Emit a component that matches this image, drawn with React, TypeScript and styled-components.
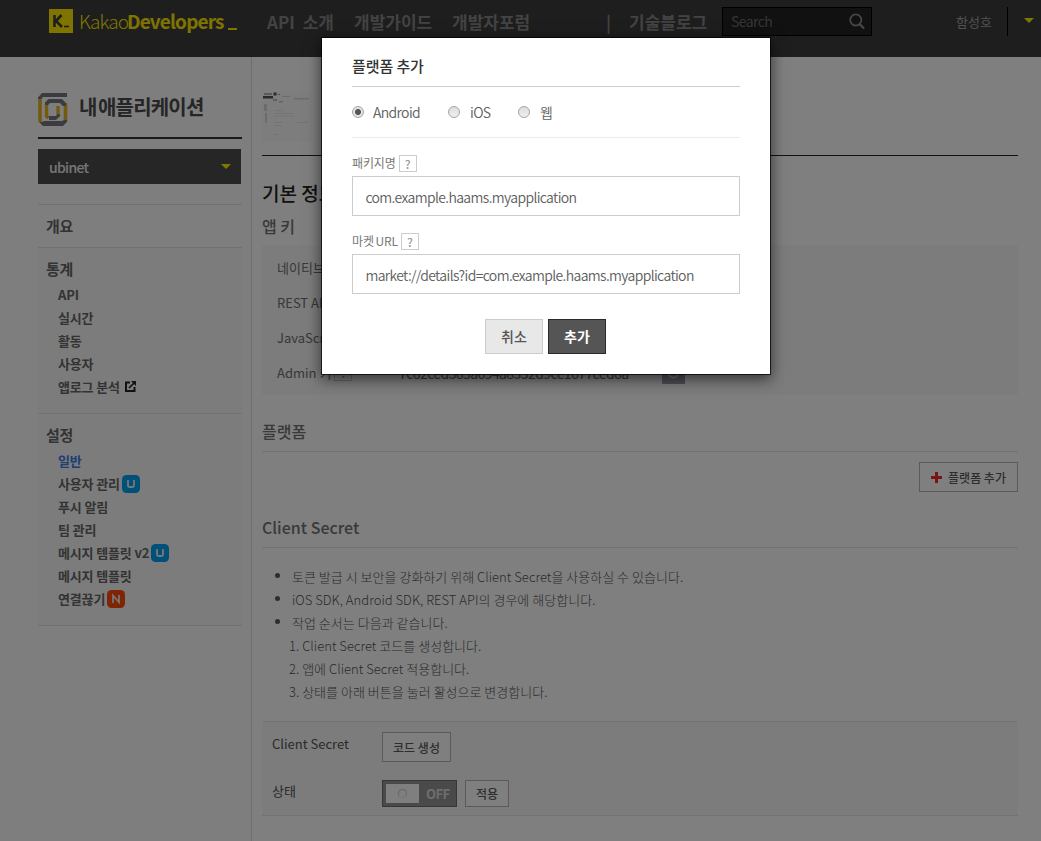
import React from "react";
import styled, { createGlobalStyle } from "styled-components";

const Global = createGlobalStyle`
  *, *::before, *::after { box-sizing: border-box; }
  html, body { margin: 0; padding: 0; }
  body {
    font-family: "Noto Sans CJK KR", "Noto Sans", sans-serif;
    font-size: 13px;
    color: #666;
    background: #fff;
    overflow: hidden;
  }
  h1, h2, h3, ul, ol, p { margin: 0; padding: 0; font-weight: inherit; }
  ul, ol { list-style: none; }
  button, input { font-family: inherit; margin: 0; }
`;

const Page = styled.div`
  position: relative;
  height: 841px;
  overflow: hidden;
  display: flex;
  flex-direction: column;
`;

/* ---------- header ---------- */

const Header = styled.header`
  flex: none;
  height: 57px;
  background: #3c3c3c;
  display: flex;
  align-items: flex-start;
  padding: 7px 7px 0 49px;
  white-space: nowrap;
`;

const Logo = styled.a`
  display: flex;
  width: 218px;
  color: #ffe800;
  height: 30px;
  line-height: 28px;
  font-size: 19px;
`;

const LogoMark = styled.svg`
  display: block;
  margin: 2px 6px 0 0;
`;

const LogoThin = styled.span`
  font-weight: 300;
  letter-spacing: -0.9px;
  width: 48px;
`;

const LogoBold = styled.span`
  font-weight: 700;
  letter-spacing: -0.85px;
  width: 101px;
`;

const LogoCursor = styled.span`
  width: 9px;
  height: 2px;
  margin-top: 21px;
  background: #ffe800;
`;

const NavItem = styled.a<{ $w: number; $gap?: number }>`
  width: ${(p) => p.$w}px;
  height: 30px;
  line-height: 29px;
  font-size: 17px;
  font-weight: 700;
  color: #868686;
  word-spacing: ${(p) => p.$gap ?? 0}px;
`;

const SearchBox = styled.div`
  width: 150px;
  height: 29px;
  border: 1px solid #000;
  background: #222;
  display: flex;
  align-items: center;
  justify-content: space-between;
  padding: 0 6px 0 8px;
  color: #6c6c6c;
  font-size: 14px;
  letter-spacing: -0.6px;
  line-height: 27px;
`;

const UserName = styled.span`
  margin-left: 84px;
  width: 51px;
  line-height: 29px;
  font-size: 13px;
  color: #a0a0a0;
`;

const UserMenu = styled.div`
  height: 29px;
  border-left: 1px solid #000;
  padding: 11px 0 0 16px;
`;

const Caret = styled.span`
  display: block;
  width: 0;
  height: 0;
  border: 5px solid transparent;
  border-top-color: #fff000;
  border-bottom: 0;
`;

/* ---------- frame ---------- */

const Body = styled.div`
  flex: 1;
  display: flex;
`;

const Sidebar = styled.aside`
  flex: none;
  width: 252px;
  padding: 36px 9px 0 38px;
  border-right: 1px solid #dcdcdc;
  background: #fdfdfd;
`;

const AppTitle = styled.div`
  display: flex;
  height: 46px;
  border-bottom: 2px solid #333;
  margin-bottom: 10px;
  width: 204px;
`;

const AppTitleText = styled.h1`
  margin-left: 11px;
  font-size: 20px;
  font-weight: 700;
  line-height: 27px;
  letter-spacing: -0.8px;
  word-spacing: -2.4px;
  color: #4d4d4d;
`;

const AppSelect = styled.div`
  width: 203px;
  height: 35px;
  background: #4c4c4c;
  display: flex;
  align-items: center;
  justify-content: space-between;
  padding: 0 10px 0 11px;
  color: #ececec;
  font-size: 14px;
  font-weight: 500;
  letter-spacing: -0.7px;
  margin-bottom: 20px;
`;

const MenuGroup = styled.section<{ $h: number }>`
  width: 204px;
  height: ${(p) => p.$h}px;
  border-top: 1px solid #e2e2e2;
  background: ${(p) => (p.$h > 50 ? "#f9f9f9" : "transparent")};
  padding: 10px 0 0 8px;
  &:last-child {
    border-bottom: 1px solid #e2e2e2;
  }
`;

const MenuHead = styled.h2`
  height: 25px;
  line-height: 21px;
  font-size: 15px;
  font-weight: 700;
  letter-spacing: -0.3px;
  color: #666;
`;

const MenuItem = styled.li<{ $active?: boolean }>`
  height: 23px;
  padding-left: 12px;
  display: flex;
  align-items: center;
  font-size: 13px;
  font-weight: 700;
  letter-spacing: -0.15px;
  color: ${(p) => (p.$active ? "#3c7ae6" : "#666")};
  & > svg { margin-left: 2px; }
`;

/* ---------- main ---------- */

const Main = styled.main`
  flex: 1;
  padding: 33px 23px 0 10px;
`;

const AppHeader = styled.div`
  height: 66px;
  border-bottom: 1px solid #222;
  padding-top: 2px;
`;

const PageTitle = styled.h2`
  margin: 21px 0 6px;
  height: 32px;
  line-height: 32px;
  font-size: 19px;
  font-weight: 500;
  color: #222;
`;

const SectionTitle = styled.h3<{ $h: number; $lined?: boolean }>`
  height: ${(p) => p.$h}px;
  line-height: 22px;
  font-size: 16px;
  font-weight: 500;
  color: #727272;
  border-bottom: ${(p) => (p.$lined ? "1px solid #e4e4e4" : "0")};
`;

const KeyPanel = styled.div`
  margin: 3px 0 25px;
  height: 150px;
  background: #f8f8f8;
  padding: 5px 0 0 15px;
`;

const KeyRow = styled.div`
  display: flex;
  align-items: center;
  height: 35px;
  font-size: 13px;
  color: #707070;
`;

const KeyLabel = styled.div`
  width: 122px;
  display: flex;
  align-items: center;
`;

const KeyValue = styled.div`
  width: 263px;
  font-size: 14px;
  letter-spacing: -0.58px;
  color: #666;
`;

const Hint = styled.span`
  display: inline-block;
  width: 18px;
  height: 17px;
  border: 1px solid #ccc;
  margin-left: 3px;
  text-align: center;
  line-height: 15px;
  font-size: 12px;
  font-weight: 500;
  color: #999;
`;

const Refresh = styled.div`
  width: 23px;
  height: 22px;
  background: #9a9ca4;
  display: flex;
  align-items: center;
  justify-content: center;
`;

const PlatformBar = styled.div`
  height: 64px;
  padding-top: 10px;
  display: flex;
  justify-content: flex-end;
`;

const OutlineButton = styled.button<{ $w: number; $h: number }>`
  width: ${(p) => p.$w}px;
  height: ${(p) => p.$h}px;
  display: flex;
  align-items: center;
  justify-content: center;
  gap: 6px;
  padding: 0;
  border: 1px solid #b4b4b4;
  background: #fff;
  font-size: 12px;
  font-weight: 500;
  color: #5c5c5c;
`;

const NoteList = styled.ul`
  padding: 17px 0 0 13px;
  height: 173px;
  font-weight: 300;
  font-size: 13px;
  letter-spacing: 0.02px;
  color: #555;
`;

const Note = styled.li`
  height: 23px;
  display: flex;
  align-items: center;
  &::before {
    content: "";
    width: 5px;
    height: 5px;
    border-radius: 50%;
    background: #5a5a5a;
    margin: -2px 12px 0 0;
  }
`;

const Step = styled.li`
  height: 23px;
  line-height: 23px;
  padding-left: 14px;
`;

const SecretPanel = styled.div`
  height: 95px;
  background: #f8f8f8;
  border-top: 1px solid #e4e4e4;
  border-bottom: 1px solid #e4e4e4;
  padding: 10px 0 0 10px;
`;

const SecretRow = styled.div`
  display: flex;
  height: 48px;
  gap: 8px;
`;

const SecretLabel = styled.div<{ $line: number }>`
  width: 102px;
  line-height: ${(p) => p.$line}px;
  font-size: 13px;
  color: #555;
`;

const Toggle = styled.div`
  width: 75px;
  height: 27px;
  background: #949494;
  border: 1px solid #6c6c6c;
  display: flex;
  align-items: center;
  padding-left: 3px;
  color: #ddd;
  font-size: 13px;
  font-weight: 700;
  letter-spacing: -0.5px;
`;

const Knob = styled.div`
  width: 33px;
  height: 19px;
  background: #fff;
  display: flex;
  align-items: center;
  justify-content: center;
  margin-right: 7px;
  &::after {
    content: "";
    width: 9px;
    height: 9px;
    border-radius: 50%;
    border: 1px solid #ccc;
    border-bottom-color: #eee;
  }
`;

/* ---------- modal ---------- */

const Overlay = styled.div`
  position: absolute;
  inset: 0;
  background: rgba(0, 0, 0, 0.5);
`;

const Modal = styled.div`
  position: absolute;
  left: 322px;
  top: 38px;
  width: 448px;
  height: 336px;
  background: #fff;
  padding: 17px 30px 0;
  box-shadow: 0 0 0 1px rgba(0, 0, 0, 0.7), 0 4px 14px 1px rgba(0, 0, 0, 0.6);
`;

const ModalTitle = styled.h2`
  height: 32px;
  line-height: 22px;
  font-size: 15px;
  font-weight: 500;
  color: #333;
  border-bottom: 1px solid #ccc;
  letter-spacing: -0.1px;
`;

const RadioRow = styled.div`
  display: flex;
  height: 51px;
  border-bottom: 1px solid #ececec;
  line-height: 49px;
  font-size: 14px;
  font-weight: 350;
  letter-spacing: -0.64px;
  color: #606060;
`;

const RadioOption = styled.label<{ $w: number }>`
  width: ${(p) => p.$w}px;
  display: flex;
  align-items: center;
  white-space: nowrap;
`;

const RadioDot = styled.span<{ $on?: boolean }>`
  flex: none;
  width: 12px;
  height: 12px;
  border-radius: 50%;
  border: 1px solid #a4a4a4;
  background: ${(p) =>
    p.$on
      ? "radial-gradient(circle, #555 0 2.6px, #e4e4e4 3.4px)"
      : "linear-gradient(#ddd, #f0f0f0)"};
  margin-right: ${(p) => (p.$on ? 9 : 10)}px;
`;

const FieldLabel = styled.div<{ $top: number }>`
  display: flex;
  align-items: center;
  height: 17px;
  margin: ${(p) => p.$top}px 0 4px;
  font-size: 12px;
  letter-spacing: -0.15px;
  word-spacing: -0.8px;
  line-height: 17px;
  color: #777;
`;

const LabelText = styled.span`
  line-height: 15px;
  height: 17px;
`;

const Field = styled.div`
  height: 40px;
  border: 1px solid #ccc;
  padding-left: 12.4px;
  line-height: 40px;
  font-size: 14px;
  font-weight: 350;
  letter-spacing: -0.63px;
  color: #606060;
`;

const Actions = styled.div`
  display: flex;
  justify-content: center;
  gap: 5px;
  padding: 25px 1px 0 0;
`;

const ActionButton = styled.button<{ $primary?: boolean }>`
  width: 58px;
  height: 35px;
  padding: 0;
  font-size: 14px;
  line-height: 33px;
  font-weight: ${(p) => (p.$primary ? 700 : 500)};
  color: ${(p) => (p.$primary ? "#fff" : "#555")};
  background: ${(p) => (p.$primary ? "#555" : "#e8e8e8")};
  border: 1px solid ${(p) => (p.$primary ? "#2a2a2a" : "#ccc")};
`;

/* ---------- drawings ---------- */

const KMark = () => (
  <LogoMark width="24" height="24" viewBox="0 0 24 24">
    <rect width="24" height="24" fill="#ffe800" />
    <path d="M5.500 6v12M12.500 6L7 12l6 6" stroke="#3c3c3c" strokeWidth="2.600" fill="none" />
    <path d="M15 17.500h5" stroke="#3c3c3c" strokeWidth="1.600" />
  </LogoMark>
);

const AppMark = () => (
  <svg width="30" height="33" viewBox="0 0 30 33" fill="none">
    <path d="M2 5V29" stroke="#e6b422" strokeWidth="3.600" />
    <path d="M27.500 10V29" stroke="#e6b422" strokeWidth="3.600" />
    <path d="M0 4.500L4 0H29V4H5L3.500 6H0z" fill="#74787e" />
    <path d="M1 29h3l2-1h18l2-1h3v2l-4 4H5z" fill="#74787e" />
    <path d="M8.500 10V23l2 2" stroke="#e6b422" strokeWidth="3.400" />
    <path d="M7 9.500L10.500 6H24l4 4v3h-3.500l-2.500-3H12l-2 2H7z" fill="#74787e" />
    <path d="M20 13V24" stroke="#e6b422" strokeWidth="3.400" />
    <path d="M11 23h7l2-2h2v2l-4 4h-7z" fill="#74787e" />
  </svg>
);

const SearchIcon = () => (
  <svg width="16" height="17" viewBox="0 0 16 17" fill="none" stroke="#909090">
    <circle cx="6.800" cy="7" r="5.600" strokeWidth="1.700" />
    <path d="M10.800 11.200L15 15.600" strokeWidth="2.200" />
  </svg>
);

const ExternalMark = styled.svg`
  && { margin-left: 5px; }
`;

const ExternalIcon = () => (
  <ExternalMark width="11" height="11" viewBox="0 0 11 11" fill="none" stroke="#222">
    <path d="M5 1.500H1V10H9.500V6" strokeWidth="2" />
    <path d="M4 7L9 2" strokeWidth="1.700" />
    <path d="M6 0h5v5z" fill="#222" stroke="none" />
  </ExternalMark>
);

const Badge = ({ kind }: { kind: "U" | "N" }) => (
  <svg width="18" height="18" viewBox="0 0 18 18" fill="none">
    <rect width="18" height="18" rx="4.500" fill={kind === "U" ? "#00a0f0" : "#ff4a08"} />
    {kind === "U" ? (
      <path d="M6 5v5.200Q6 12 7.800 12h2.400Q12 12 12 10.200V5" stroke="#f0f0f0" strokeWidth="1.800" />
    ) : (
      <path d="M6 13V5.500L12 12.200V5" stroke="#f0f0f0" strokeWidth="1.700" />
    )}
  </svg>
);

const Thumbnail = () => (
  <svg width="50" height="50" viewBox="0 0 50 50">
    <rect width="50" height="50" fill="#fbfbfb" />
    <g fill="#555">
      <rect x="2" y="1" width="8" height="2" fill="#b4b4b4" />
      <rect x="1" y="4" width="10" height="2.500" />
      <rect x="11.500" y="0.500" width="3" height="3" />
      <rect x="16" y="2" width="2" height="1" fill="#999" />
    </g>
    <g fill="#d8d8d8">
      <rect x="20" y="4" width="8" height="1" />
      <rect x="32" y="6" width="15" height="1.500" />
      <rect x="2" y="12" width="3" height="7" />
      <rect x="3" y="21" width="2" height="10" />
    </g>
    <g fill="#e9e9e9">
      <rect x="12" y="18" width="9" height="1" />
      <rect x="12" y="21" width="20" height="1" />
      <rect x="12" y="23.500" width="20" height="1" />
      <rect x="12" y="30" width="9" height="1" />
      <rect x="12" y="33" width="7" height="1" />
      <rect x="34" y="30" width="12" height="1" />
      <rect x="12" y="42" width="5" height="1" />
    </g>
    <rect x="11" y="7" width="4" height="2" fill="#a9c9c9" />
    <rect x="17" y="9" width="4" height="1.500" fill="#a9d2cf" />
  </svg>
);

const stats = ["API", "실시간", "활동", "사용자"];
const keys = ["네이티브 앱 키", "REST API 키", "JavaScript 키"];
const steps = [
  "1. Client Secret 코드를 생성합니다.",
  "2. 앱에 Client Secret 적용합니다.",
  "3. 상태를 아래 버튼을 눌러 활성으로 변경합니다.",
];

export default function App() {
  return (
    <Page>
      <Global />
      <Header>
        <Logo>
          <KMark />
          <LogoThin>Kakao</LogoThin>
          <LogoBold>Developers</LogoBold>
          <LogoCursor />
        </Logo>
        <NavItem $w={87} $gap={4}>API 소개</NavItem>
        <NavItem $w={98}>개발가이드</NavItem>
        <NavItem $w={154}>개발자포럼</NavItem>
        <NavItem $w={23}>|</NavItem>
        <NavItem $w={93}>기술블로그</NavItem>
        <SearchBox>
          Search
          <SearchIcon />
        </SearchBox>
        <UserName>함성호</UserName>
        <UserMenu>
          <Caret />
        </UserMenu>
      </Header>

      <Body>
        <Sidebar>
          <AppTitle>
            <AppMark />
            <AppTitleText>내 애플리케이션</AppTitleText>
          </AppTitle>
          <AppSelect>
            ubinet
            <Caret />
          </AppSelect>
          <nav>
            <MenuGroup $h={43}>
              <MenuHead>개요</MenuHead>
            </MenuGroup>
            <MenuGroup $h={166}>
              <MenuHead>통계</MenuHead>
              <ul>
                {stats.map((s) => (
                  <MenuItem key={s}>{s}</MenuItem>
                ))}
                <MenuItem>
                  앱로그 분석
                  <ExternalIcon />
                </MenuItem>
              </ul>
            </MenuGroup>
            <MenuGroup $h={213}>
              <MenuHead>설정</MenuHead>
              <ul>
                <MenuItem $active>일반</MenuItem>
                <MenuItem>
                  사용자 관리
                  <Badge kind="U" />
                </MenuItem>
                <MenuItem>푸시 알림</MenuItem>
                <MenuItem>팀 관리</MenuItem>
                <MenuItem>
                  메시지 템플릿 v2
                  <Badge kind="U" />
                </MenuItem>
                <MenuItem>메시지 템플릿</MenuItem>
                <MenuItem>
                  연결끊기
                  <Badge kind="N" />
                </MenuItem>
              </ul>
            </MenuGroup>
          </nav>
        </Sidebar>

        <Main>
          <AppHeader>
            <Thumbnail />
          </AppHeader>
          <PageTitle>기본 정보</PageTitle>
          <SectionTitle $h={27}>앱 키</SectionTitle>
          <KeyPanel>
            {keys.map((k) => (
              <KeyRow key={k}>
                <KeyLabel>{k}</KeyLabel>
              </KeyRow>
            ))}
            <KeyRow>
              <KeyLabel>
                Admin 키<Hint>?</Hint>
              </KeyLabel>
              <KeyValue>7c62ced365a694a8332d9ce1677ced6a</KeyValue>
              <Refresh>
                <svg width="13" height="13" viewBox="0 0 13 13" fill="none" stroke="#ddd" strokeWidth="1.800">
                  <path d="M9.500 2.700A5 5 0 1 0 11.400 7" />
                  <path d="M8 0v4.500h4.500" strokeWidth="1.200" />
                </svg>
              </Refresh>
            </KeyRow>
          </KeyPanel>
          <SectionTitle $h={32} $lined>플랫폼</SectionTitle>
          <PlatformBar>
            <OutlineButton $w={99} $h={30}>
              <svg width="11" height="11" viewBox="0 0 11 11">
                <path d="M0 5.500h11M5.500 0v11" stroke="#f02a2a" strokeWidth="3" />
              </svg>
              플랫폼 추가
            </OutlineButton>
          </PlatformBar>
          <SectionTitle $h={32} $lined>Client Secret</SectionTitle>
          <NoteList>
            <Note>토큰 발급 시 보안을 강화하기 위해 Client Secret을 사용하실 수 있습니다.</Note>
            <Note>iOS SDK, Android SDK, REST API의 경우에 해당합니다.</Note>
            <Note>작업 순서는 다음과 같습니다.</Note>
            {steps.map((s) => (
              <Step key={s}>{s}</Step>
            ))}
          </NoteList>
          <SecretPanel>
            <SecretRow>
              <SecretLabel $line={23}>Client Secret</SecretLabel>
              <OutlineButton $w={69} $h={30}>코드 생성</OutlineButton>
            </SecretRow>
            <SecretRow>
              <SecretLabel $line={21}>상태</SecretLabel>
              <Toggle>
                <Knob />
                OFF
              </Toggle>
              <OutlineButton $w={44} $h={27}>적용</OutlineButton>
            </SecretRow>
          </SecretPanel>
        </Main>
      </Body>

      <Overlay>
        <Modal>
          <ModalTitle>플랫폼 추가</ModalTitle>
          <RadioRow>
            <RadioOption $w={96}>
              <RadioDot $on />
              Android
            </RadioOption>
            <RadioOption $w={70}>
              <RadioDot />
              iOS
            </RadioOption>
            <RadioOption $w={60}>
              <RadioDot />
              웹
            </RadioOption>
          </RadioRow>
          <FieldLabel $top={17}>
            <LabelText>패키지명</LabelText>
            <Hint>?</Hint>
          </FieldLabel>
          <Field>com.example.haams.myapplication</Field>
          <FieldLabel $top={17}>
            <LabelText>마켓 URL</LabelText>
            <Hint>?</Hint>
          </FieldLabel>
          <Field>market://details?id=com.example.haams.myapplication</Field>
          <Actions>
            <ActionButton>취소</ActionButton>
            <ActionButton $primary>추가</ActionButton>
          </Actions>
        </Modal>
      </Overlay>
    </Page>
  );
}
